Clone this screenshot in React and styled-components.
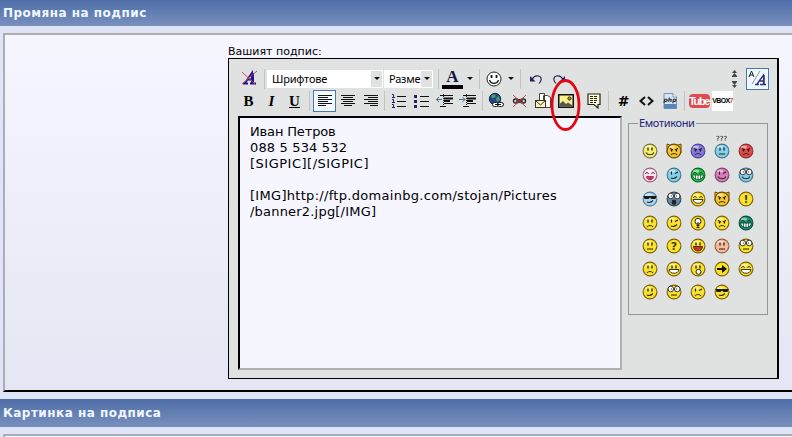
import React from 'react';
import styled, {createGlobalStyle} from 'styled-components';

const GlobalStyle = createGlobalStyle`
  * {
    box-sizing: border-box;
  }
  body {
    margin: 0;
    overflow: hidden;
    background: #dfe4f6;
    font-family: "DejaVu Sans", "Noto Sans", sans-serif;
    font-size: 11px;
    color: #000;
  }
  svg {
    display: block;
    flex: none;
  }
`

const ink = '#15153a'
const line = {stroke: '#111', strokeWidth: 1.3, fill: 'none'}

const ArrowDown = () => (
    <svg width="6" height="3" viewBox="0 0 6 3"><path d="M0 0h6L3 3z" fill="#111"/></svg>
)

const ClearIcon = () => (
    <svg width="17" height="17" viewBox="0 0 17 17">
        <path d="M2 13.500h5M9 13.500h6M4 13L11 3v10M6.500 9.500h6" stroke="#171798" strokeWidth="2" fill="none"/>
        <path d="M12 3v10" stroke="#171798" strokeWidth="2"/>
        <path d="M1 2l14 13M16 1L1 14" stroke="#e1444c" strokeWidth="1"/>
    </svg>
)

const SmileIcon = () => (
    <svg width="16" height="16" viewBox="0 0 16 16">
        <circle cx="8" cy="8" r="7" fill="#fff" stroke="#222" strokeWidth="1"/>
        <path d="M5.500 4v3M10.500 4v3" stroke="#111" strokeWidth="1.800"/>
        <path d="M3.500 9c1.500 4.500 7.500 4.500 9 0" {...line}/>
    </svg>
)

const UndoIcon = ({flip}) => (
    <svg width="14" height="12" viewBox="0 0 14 12">
        <g transform={flip ? 'translate(14 0) scale(-1 1)' : undefined}>
            <path d="M2.500 7.500C4 4 7 2.500 9.500 3s3.500 3 2 5.500l-1.500 2" stroke="#22225c" strokeWidth="1.200" fill="none"/>
            <path d="M1 3v5.500h5.500z" fill="#22225c"/>
        </g>
    </svg>
)

const ResizeIcon = () => (
    <svg width="7" height="18" viewBox="0 0 7 18">
        <path d="M3.500 0L6 3H1zM3.500 3L6 6H1zM1 12h5l-2.500 3zM1 15h5l-2.500 3z" fill="#444"/>
        <path d="M1 6.500h5M1 11.500h5" stroke="#444"/>
    </svg>
)

const ModeIcon = () => (
    <svg width="20" height="19" viewBox="0 0 20 19">
        <path d="M1 8l2.500-6L6 8M2 6h3" stroke="#222" fill="none"/>
        <path d="M4 15L12 2" stroke="#7799bb"/>
        <path d="M7 15.500h4M12 15.500h6M9 15l6.500-9v9M11 12h4.500" stroke="#303080" strokeWidth="1.300" fill="none"/>
        <path d="M16 6v9" stroke="#303080" strokeWidth="1.500"/>
    </svg>
)

const AlignIcon = ({side}) => {
    const rows = [14, 10, 14, 10, 14, 8]
    return (
        <svg width="14" height="13" viewBox="0 0 14 13" shapeRendering="crispEdges">
            {rows.map((w, i) => {
                const x = side === 'left' ? 0 : side === 'right' ? 14 - w : (14 - w) / 2
                return <rect key={i} x={x} y={1 + i * 2} width={w} height="1" fill="#111"/>
            })}
        </svg>
    )
}

const ListIcon = ({ordered}) => (
    <svg width="15" height="14" viewBox="0 0 15 14">
        {[2, 7, 12].map(y => (
            <g key={y}>
                <path d={`M6 ${y + .5}h9`} stroke="#111"/>
                {ordered
                    ? <path d={`M1 ${y - 1.500}h1.500v3M1 ${y + 1.500}h3`} stroke="#22225c" fill="none"/>
                    : <rect x="0" y={y - 1} width="3" height="3" fill="#22225c"/>}
            </g>
        ))}
    </svg>
)

const IndentIcon = ({out}) => (
    <svg width="17" height="14" viewBox="0 0 17 14">
        <path d="M4 1.500h13M8 9.500h9M4 12.500h6" stroke="#111"/>
        <path d="M8 4.500h9M8 7h6" stroke="#111" strokeWidth="1.800"/>
        <path d="M7.500 0v14" stroke="#111" strokeDasharray="1 1"/>
        <path d={out ? 'M0 5.500h6M3 3L.5 5.500 3 8' : 'M0 5.500h6M3.500 3L6 5.500 3.500 8'} stroke="#526a9a" fill="none"/>
    </svg>
)

const LinkIcon = () => (
    <svg width="17" height="17" viewBox="0 0 17 17">
        <circle cx="7" cy="7" r="5.700" fill="#204a80" stroke="#12284e"/>
        <path d="M3 4l3-2 2 2-2 2H4zM8 6l3-2 1 4-3 2z" fill="#4b9a78"/>
        <rect x="4.500" y="10.500" width="6" height="4" rx="2" fill="#fff" stroke="#111"/>
        <rect x="9.500" y="10.500" width="6" height="4" rx="2" fill="#fff" stroke="#111"/>
        <path d="M7 12.500h6" stroke="#111"/>
    </svg>
)

const UnlinkIcon = () => (
    <svg width="15" height="14" viewBox="0 0 15 14">
        <rect x="1.500" y="5" width="5" height="4" rx="2" fill="none" stroke="#222" strokeWidth="1.400"/>
        <rect x="8.500" y="5" width="5" height="4" rx="2" fill="none" stroke="#222" strokeWidth="1.400"/>
        <path d="M4 7h7M7.500 5v4" stroke="#222" strokeWidth="1.300"/>
        <path d="M1 1l13 12M14 1L1 13" stroke="#d8434b"/>
    </svg>
)

const MailIcon = () => (
    <svg width="16" height="17" viewBox="0 0 16 17">
        <path d="M4.500 1.500h5v9h-5zM8.500 3.500h4l3 2v10h-7z" fill="#fff" stroke="#444"/>
        <rect x=".5" y="8.500" width="10" height="7" fill="#fdf7b8" stroke="#333"/>
        <path d="M1 9l4.500 4L10 9" stroke="#333" fill="none"/>
    </svg>
)

const ImageIcon = () => (
    <svg width="16" height="14" viewBox="0 0 16 14">
        <rect x=".75" y=".75" width="14.500" height="12.500" fill="#fbf08c" stroke="#111" strokeWidth="1.500"/>
        <circle cx="11.500" cy="4.500" r="1.700" fill="#a08a30" stroke="#222" strokeWidth=".8"/>
        <path d="M1.500 12.500V10L5 7l3 3 2-1.500 4.500 3v1z" fill="#555"/>
    </svg>
)

const QuoteIcon = () => (
    <svg width="14" height="16" viewBox="0 0 14 16">
        <path d="M1 1h12v10.500h-2V15l-4-3.500H1z" fill="#fffbd0" stroke="#222" strokeWidth="1.200"/>
        <path d="M3 3.500h8M3 5.500h8M3 7.500h8M3 9.500h6" stroke="#222" strokeDasharray="3 1"/>
    </svg>
)

const CodeIcon = () => (
    <svg width="15" height="10" viewBox="0 0 15 10">
        <path d="M6 1L1.500 5 6 9M9 1l4.500 4L9 9" stroke="#111" strokeWidth="2" fill="none"/>
    </svg>
)

const PhpIcon = () => (
    <svg width="14" height="16" viewBox="0 0 14 16">
        <path d="M1 .5h9l3.500 3.500v11.500H1z" fill="#d3e4f6" stroke="#7896b4"/>
        <path d="M10 .5V4h3.500" fill="#fff" stroke="#7896b4"/>
        <rect x="1" y="11" width="12.500" height="4.500" fill="#5b85b8"/>
        <text x="7" y="9" textAnchor="middle" fontSize="6" fontWeight="bold" fontStyle="italic" fill="#222">php</text>
    </svg>
)

const colors = {
    yellow: ['#f8e22b', '#806000'],
    pale: ['#f5ef70', '#77713a'],
    gold: ['#f0c62b', '#704800'],
    violet: ['#8376dc', '#51459c'],
    sky: ['#83cfea', '#42768f'],
    red: ['#dd4a4c', '#8f2e2e'],
    white: ['#fbe3ee', '#9a6080'],
    green: ['#25c34a', '#116329'],
    pink: ['#d57bba', '#85416f'],
    ice: ['#a9d4f3', '#557c9c'],
    slate: ['#668aa5', '#33495c'],
    teal: ['#159573', '#094b3a'],
    peach: ['#f4ba9c', '#96613f'],
}

const mouths = {
    smile: 'M4 9.500c1.500 3 6.500 3 8 0',
    smirk: 'M5 11c2 1 4 .5 6-1.500',
    sad: 'M5 12c1.500-2 4.500-2 6 0',
    flat: 'M5 11h6',
}

const Smiley = ({color, mouth, eyes = 'dots', horns, mark}) => {
    const [fill, edge] = colors[color]
    return (
        <svg width="16" height="16" viewBox="0 0 16 16">
            {horns && <path d="M1 1l4 1.500h6L15 1v9H1z" fill={fill} stroke={edge}/>}
            <circle cx="8" cy="8" r="6.900" fill={fill} stroke={edge} strokeWidth="1.100"/>
            {!mark && <ellipse cx="6" cy="4" rx="3" ry="1.600" fill="#fff" opacity=".5"/>}
            {!mark && eyes === 'dots' && <path d="M6 4.500v3M10 4.500v3" stroke="#222" strokeWidth="1.300"/>}
            {eyes === 'angry' && <path d="M4 5.500l3 1.500M12 5.500L9 7M5.500 7v1.500M10.500 7v1.500" stroke="#311" strokeWidth="1.200" fill="none"/>}
            {eyes === 'happy' && <path d="M3.500 7c.5-2 2.500-2 3 0M9.500 7c.5-2 2.500-2 3 0" stroke="#222" fill="none"/>}
            {eyes === 'wink' && <path d="M5.500 4.500v3M9 6.500l3-1.500" stroke="#222" strokeWidth="1.200"/>}
            {eyes === 'shades' && <path d="M1.500 5h13l-1 3h-4L8 6.500 6.500 8h-4z" fill="#181818"/>}
            {eyes === 'big' && (
                <g fill="#fff" stroke="#222" strokeWidth=".9">
                    <circle cx="4.800" cy="5" r="2.800"/>
                    <circle cx="11.200" cy="5" r="2.800"/>
                    <path d="M5.500 4.500v1M10.500 4.500v1" strokeWidth="1.200"/>
                </g>
            )}
            {mouths[mouth] && <path d={mouths[mouth]} stroke="#332" strokeWidth="1.100" fill="none"/>}
            {mouth === 'grin' && <path d="M3 8.500h10c-.5 5-9.500 5-10 0z" fill="#fff" stroke="#222" strokeWidth=".9"/>}
            {mouth === 'teeth' && (
                <g>
                    <path d="M2.500 8h11c-.5 6-10.500 6-11 0z" fill="#fff" stroke={edge}/>
                    <path d="M5.500 8v4M8 8v5M10.500 8v4" stroke={edge} strokeWidth=".8"/>
                </g>
            )}
            {mouth === 'laugh' && <path d="M3.500 8.500h9c-.5 6-8.500 6-9 0z" fill="#d02f24" stroke="#4a1808" strokeWidth=".9"/>}
            {mouth === 'open' && <ellipse cx="8" cy="11.300" rx="2.300" ry="2.700" fill="#24242c"/>}
            {mouth === 'shout' && <circle cx="8.500" cy="10.800" r="2.500" fill="#fff" stroke="#222"/>}
            {mouth === 'tongue' && <path d="M4.500 9.500h7c-.5 4.500-6.500 4.500-7 0z" fill="#db2d62" stroke="#802040" strokeWidth=".7"/>}
            {mark === 'arrow' && <path d="M3 7h5V4l5 4-5 4V9H3z" fill="#111"/>}
            {mark === 'bulb' && (
                <g>
                    <circle cx="8" cy="6.300" r="3" fill="#fff" stroke="#222"/>
                    <path d="M8 7v6M6.500 10.500h3M6.500 12.500h3" stroke="#222"/>
                </g>
            )}
            {(mark === '!' || mark === '?') && (
                <text x="8" y="12" textAnchor="middle" fontSize="11" fontWeight="bold" fill="#4b3800">{mark}</text>
            )}
        </svg>
    )
}

const smileys = [
    {color: 'pale', mouth: 'smile'},
    {color: 'gold', mouth: 'sad', eyes: 'angry', horns: true},
    {color: 'violet', mouth: 'sad', eyes: 'angry'},
    {color: 'sky', mouth: 'flat', note: '???'},
    {color: 'red', mouth: 'sad', eyes: 'angry'},
    {color: 'white', mouth: 'tongue', eyes: 'happy'},
    {color: 'sky', mouth: 'smirk', eyes: 'wink'},
    {color: 'green', mouth: 'teeth', eyes: 'happy'},
    {color: 'pink', mouth: 'smile', eyes: 'wink'},
    {color: 'sky', mouth: 'smile', eyes: 'big'},
    {color: 'ice', mouth: 'smirk', eyes: 'shades'},
    {color: 'slate', mouth: 'open', eyes: 'big'},
    {color: 'yellow', mouth: 'grin', eyes: 'happy'},
    {color: 'gold', mouth: 'sad', eyes: 'angry', horns: true},
    {color: 'yellow', mark: '!'},
    {color: 'yellow', mouth: 'sad'},
    {color: 'yellow', mouth: 'smirk', eyes: 'wink'},
    {color: 'yellow', mark: 'bulb'},
    {color: 'yellow', mouth: 'sad', eyes: 'angry'},
    {color: 'teal', mouth: 'teeth', eyes: 'happy'},
    {color: 'yellow', mouth: 'flat'},
    {color: 'yellow', mark: '?'},
    {color: 'yellow', mouth: 'laugh'},
    {color: 'peach', mouth: 'flat'},
    {color: 'yellow', mouth: 'flat', eyes: 'big'},
    {color: 'yellow', mouth: 'sad'},
    {color: 'yellow', mouth: 'grin'},
    {color: 'yellow', mouth: 'shout'},
    {color: 'yellow', mark: 'arrow'},
    {color: 'yellow', mouth: 'grin', eyes: 'happy'},
    {color: 'yellow', mouth: 'smirk'},
    {color: 'yellow', mouth: 'flat', eyes: 'big'},
    {color: 'yellow', mouth: 'sad', eyes: 'wink'},
    {color: 'yellow', mouth: 'smirk', eyes: 'shades'},
]

const App = () => {
    return (
        <Page>
            <GlobalStyle/>
            <Title $height={26}>Промяна на подпис</Title>
            <Panel>
                <Label>Вашият подпис:</Label>
                <Editor>
                    <Toolbar $top>
                        <Tool $w={24}><ClearIcon/></Tool>
                        <Divider $w={6}/>
                        <Select $w={116}><span>Шрифтове</span><i><ArrowDown/></i></Select>
                        <Select $w={49}><span>Разме</span><i><ArrowDown/></i></Select>
                        <Divider $w={8}/>
                        <ColorTool><b>A</b><hr/></ColorTool>
                        <Tool $w={13}><ArrowDown/></Tool>
                        <Divider $w={7}/>
                        <Tool $w={21}><SmileIcon/></Tool>
                        <Tool $w={13}><ArrowDown/></Tool>
                        <Divider $w={7}/>
                        <Tool><UndoIcon/></Tool>
                        <Tool><UndoIcon flip/></Tool>
                        <Spacer/>
                        <Tool><ResizeIcon/></Tool>
                        <Tool $active><ModeIcon/></Tool>
                    </Toolbar>
                    <Toolbar>
                        <Tool><Letter>B</Letter></Tool>
                        <Tool><Letter as="em">I</Letter></Tool>
                        <Tool><Letter as="u">U</Letter></Tool>
                        <Divider $w={7}/>
                        <Tool $active><AlignIcon side="left"/></Tool>
                        <Tool><AlignIcon side="center"/></Tool>
                        <Tool><AlignIcon side="right"/></Tool>
                        <Divider $w={5}/>
                        <Tool><ListIcon ordered/></Tool>
                        <Tool><ListIcon/></Tool>
                        <Tool><IndentIcon out/></Tool>
                        <Tool><IndentIcon/></Tool>
                        <Divider $w={6}/>
                        <Tool><LinkIcon/></Tool>
                        <Tool><UnlinkIcon/></Tool>
                        <Tool><MailIcon/></Tool>
                        <Tool>
                            <ImageIcon/>
                            <Marker width="31" height="54" viewBox="0 0 31 54">
                                <ellipse cx="15.500" cy="27" rx="13.500" ry="24.500" fill="none" stroke="#e30613" strokeWidth="2.800"/>
                            </Marker>
                        </Tool>
                        <Divider $w={5}/>
                        <Tool><QuoteIcon/></Tool>
                        <Divider $w={7}/>
                        <Tool><Hash>#</Hash></Tool>
                        <Tool><CodeIcon/></Tool>
                        <Tool><PhpIcon/></Tool>
                        <Divider $w={6}/>
                        <Tool $w={25}><Tube>Tube</Tube></Tool>
                        <Vbox>VBOX<span>7</span></Vbox>
                    </Toolbar>
                    <Body>
                        <Message>
                            <Line $track={-0.15}>Иван Петров</Line>
                            <Line $track={0.15}>088 5 534 532</Line>
                            <Line $track={0.5}>[SIGPIC][/SIGPIC]</Line>
                            <Line>&nbsp;</Line>
                            <Line $track={0.3}>[IMG]http://ftp.domainbg.com/stojan/Pictures</Line>
                            <Line $track={0.2}>/banner2.jpg[/IMG]</Line>
                        </Message>
                        <Emoticons>
                            <legend>Емотикони</legend>
                            <SmileyGrid>
                                {smileys.map(({note, ...rest}, i) => (
                                    <SmileyCell key={i}>
                                        {note && <Note>{note}</Note>}
                                        <Smiley {...rest}/>
                                    </SmileyCell>
                                ))}
                            </SmileyGrid>
                        </Emoticons>
                    </Body>
                </Editor>
            </Panel>
            <Title $height={28}>Картинка на подписа</Title>
            <Panel/>
        </Page>
    );
};

const Page = styled.div`
  width: 792px;
  height: 437px;
  overflow: hidden;
`
const Title = styled.h1`
  margin: 0;
  height: ${p => p.$height}px;
  padding: 0 3px;
  line-height: ${p => p.$height}px;
  font-size: 12px;
  font-weight: bold;
  letter-spacing: 0.48px;
  color: #f0f7ff;
  background: linear-gradient(#4e6da8, #7890bd);
`
const Panel = styled.section`
  height: 359px;
  margin: 7px 0 7px 3px;
  padding: 11px 0 0 223px;
  border: solid #adadb5;
  border-width: 2px 0 2px 2px;
  border-bottom-color: #000;
  background: linear-gradient(#f5f6ff, #e4e6f3);
`
const Label = styled.div`
  height: 12px;
  line-height: 12px;
  white-space: nowrap;
`
const Editor = styled.div`
  width: 551px;
  height: 321px;
  padding: 8px;
  border: 1px solid #000;
  border-right-width: 2px;
  background: #e0e1e1;
`
const Toolbar = styled.div`
  display: flex;
  align-items: center;
  height: 23px;
  margin-top: ${p => p.$top ? 0 : '-1px'};
`
const Tool = styled.div`
  position: relative;
  display: flex;
  flex: none;
  align-items: center;
  justify-content: center;
  width: ${p => p.$w || 23}px;
  height: 22px;
  border: ${p => p.$active ? '1px solid #4778b5' : 'none'};
  background: ${p => p.$active ? '#f2f8ff' : 'transparent'};
`
const Divider = styled.div`
  flex: none;
  width: ${p => p.$w}px;
  height: 20px;
  background: linear-gradient(#c3c3c6, #c3c3c6) center / 1px 100% no-repeat;
`
const Select = styled.div`
  display: flex;
  flex: none;
  justify-content: space-between;
  width: ${p => p.$w}px;
  height: 18px;
  margin-right: 1px;
  padding-left: 5px;
  font-family: "Noto Sans", sans-serif;
  letter-spacing: -0.2px;
  line-height: 17px;
  background: #fff;
  overflow: hidden;
  i {
    display: flex;
    flex: none;
    align-items: center;
    justify-content: center;
    width: 11px;
    margin: 1px;
    background: #e0e1e1;
  }
`
const ColorTool = styled.div`
  width: 21px;
  height: 20px;
  text-align: center;
  font: bold 17px/16px "Liberation Serif", serif;
  color: ${ink};
  b {
    display: block;
    height: 16px;
  }
  hr {
    height: 4px;
    margin: 0;
    border: 0;
    background: #000;
  }
`
const Spacer = styled.div`
  flex: 1;
`
const Letter = styled.b`
  font: bold 15px/20px "Liberation Serif", serif;
  font-style: ${p => p.as === 'em' ? 'italic' : 'normal'};
`
const Marker = styled.svg`
  position: absolute;
  z-index: 1;
  left: -4px;
  top: -12px;
`
const Hash = styled.b`
  font-size: 14px;
`
const Tube = styled.b`
  width: 21px;
  height: 14px;
  border-radius: 4px;
  font: bold 11px/14px "Liberation Sans Narrow", "Liberation Sans", sans-serif;
  letter-spacing: -1.4px;
  text-indent: -1px;
  text-align: center;
  color: #fff;
  background: #e04b52;
`
const Vbox = styled.div`
  width: 21px;
  height: 20px;
  font: bold 7px/20px "Liberation Sans", sans-serif;
  letter-spacing: -0.6px;
  text-align: center;
  background: #fff;
  span {
    color: #e04040;
  }
`
const Body = styled.div`
  display: flex;
  gap: 6px;
  margin: 4px 0 0 1px;
`
const Message = styled.div`
  width: 384px;
  height: 254px;
  padding: 6px 10px;
  border: 2px solid #000;
  border-right-color: #b0b0b4;
  border-bottom-color: #b0b0b4;
  font-size: 13px;
  line-height: 16px;
  white-space: nowrap;
  background: #f5f6ff;
`
const Line = styled.p`
  margin: 0;
  letter-spacing: ${p => p.$track || 0}px;
`
const Emoticons = styled.fieldset`
  width: 140px;
  height: 199px;
  min-width: 0;
  margin: 0;
  padding: 0 9px;
  border: 1px solid #929698;
  legend {
    height: 14px;
    padding: 0 1px;
    font-family: "Noto Sans", sans-serif;
    letter-spacing: -0.35px;
    line-height: 14px;
    color: #22227c;
  }
`
const SmileyGrid = styled.div`
  display: grid;
  grid-template-columns: repeat(5, 24px);
  grid-template-rows: 24px 24px 24px 23px 23px 23px 24px;
  padding-top: 9px;
`
const SmileyCell = styled.div`
  position: relative;
  display: flex;
  align-items: center;
  justify-content: center;
`
const Note = styled.span`
  position: absolute;
  top: -3px;
  left: 6px;
  font-size: 7px;
  line-height: 7px;
`
export default App;
